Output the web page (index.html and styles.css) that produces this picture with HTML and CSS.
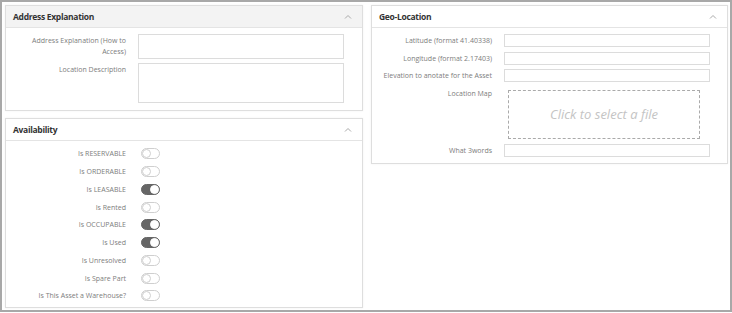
FILE: index.html
```html
<!DOCTYPE html>
<html lang="en">
<head>
    <meta charset="UTF-8">
    <title>Asset Location</title>
    <link rel="stylesheet" href="styles.css">
</head>
<body>
    <div class="frame">
        <div class="column left">
            <div class="panel">
                <div class="panel-header header-active">
                    <h3>Address Explanation</h3>
                    <svg class="chevron" width="8" height="5" viewBox="0 0 8 5"><polyline points="1,4.5 4,1.5 7,4.5" /></svg>
                </div>
                <div class="panel-body address">
                    <label class="field-label top">Address Explanation (How to Access)</label>
                    <div class="text-input tall"></div>
                    <label class="field-label top">Location Description</label>
                    <div class="text-input taller"></div>
                </div>
            </div>
            <div class="panel">
                <div class="panel-header">
                    <h3>Availability</h3>
                    <svg class="chevron" width="8" height="5" viewBox="0 0 8 5"><polyline points="1,4.5 4,1.5 7,4.5" /></svg>
                </div>
                <div class="panel-body toggles">
                    <div class="toggle-row"><span class="field-label">Is RESERVABLE</span><span class="toggle"></span></div>
                    <div class="toggle-row"><span class="field-label">Is ORDERABLE</span><span class="toggle"></span></div>
                    <div class="toggle-row"><span class="field-label">Is LEASABLE</span><span class="toggle on"></span></div>
                    <div class="toggle-row"><span class="field-label">Is Rented</span><span class="toggle"></span></div>
                    <div class="toggle-row"><span class="field-label">Is OCCUPABLE</span><span class="toggle on"></span></div>
                    <div class="toggle-row"><span class="field-label">Is Used</span><span class="toggle on"></span></div>
                    <div class="toggle-row"><span class="field-label">Is Unresolved</span><span class="toggle"></span></div>
                    <div class="toggle-row"><span class="field-label">Is Spare Part</span><span class="toggle"></span></div>
                    <div class="toggle-row"><span class="field-label">Is This Asset a Warehouse?</span><span class="toggle"></span></div>
                </div>
            </div>
        </div>
        <div class="column right">
            <div class="panel">
                <div class="panel-header">
                    <h3>Geo-Location</h3>
                    <svg class="chevron" width="8" height="5" viewBox="0 0 8 5"><polyline points="1,4.5 4,1.5 7,4.5" /></svg>
                </div>
                <div class="panel-body geo">
                    <label class="field-label">Latitude (format 41.40338)</label>
                    <div class="text-input"></div>
                    <label class="field-label">Longitude (format 2.17403)</label>
                    <div class="text-input"></div>
                    <label class="field-label">Elevation to anotate for the Asset</label>
                    <div class="text-input"></div>
                    <label class="field-label top map-label">Location Map</label>
                    <div class="file-drop">Click to select a file</div>
                    <label class="field-label">What 3words</label>
                    <div class="text-input"></div>
                </div>
            </div>
        </div>
    </div>
</body>
</html>
```

FILE: styles.css
```css
body {
    margin: 0;
    background: #fff;
    font-family: "Open Sans", "Noto Sans", sans-serif;
}
.frame {
    box-sizing: border-box;
    width: 732px;
    height: 312px;
    border: 2px solid #a8a8a8;
    padding: 3px 2px 0 3px;
    display: flex;
    gap: 8px;
    align-items: flex-start;
    background: #fff;
}
.column {
    display: flex;
    flex-direction: column;
    gap: 7px;
}
.column.left {
    width: 358px;
}
.column.right {
    flex: 1;
}
.panel {
    border: 1px solid #dedede;
    box-shadow: 0 0 2px rgba(0,0,0,0.06);
    background: #fff;
}
.panel-header {
    display: flex;
    justify-content: space-between;
    align-items: center;
    height: 21px;
    padding: 0 10px 0 7px;
    border-bottom: 1px solid #e4e4e4;
}
.header-active {
    background: #f3f3f3;
}
.panel-header h3 {
    margin: 0;
    font-size: 8.5px;
    font-weight: 700;
    color: #333;
    letter-spacing: -0.3px;
}
.chevron polyline {
    fill: none;
    stroke: #a9a9a9;
    stroke-width: 1;
}
.panel-body {
    display: grid;
    grid-template-columns: 120px 206px;
    column-gap: 12px;
    align-items: center;
}
.field-label {
    font-size: 7px;
    line-height: 11px;
    color: #7d7d7d;
    text-align: right;
}
.field-label.top {
    align-self: start;
    padding-top: 1px;
    padding-left: 10px;
}
.text-input {
    box-sizing: border-box;
    height: 13px;
    border: 1px solid #dcdcdc;
    background: #fff;
}
.address {
    padding: 6px 0 7px;
    row-gap: 4px;
}
.text-input.tall {
    height: 25px;
}
.text-input.taller {
    height: 40px;
}
.toggles {
    display: block;
    padding: 4px 0 2px;
}
.toggle-row {
    display: grid;
    grid-template-columns: 120px auto;
    column-gap: 15px;
    align-items: center;
    height: 17.75px;
}
.toggle {
    box-sizing: border-box;
    position: relative;
    width: 19px;
    height: 11px;
    border: 1px solid #cfcfcf;
    border-radius: 6px;
    background: #fff;
}
.toggle::after {
    content: "";
    position: absolute;
    top: 0;
    left: 0;
    box-sizing: border-box;
    width: 9px;
    height: 9px;
    border: 1px solid #cfcfcf;
    border-radius: 50%;
    background: #fff;
}
.toggle.on {
    background: #666;
    border-color: #666;
}
.toggle.on::after {
    left: 8px;
    border-color: #fff;
}
.geo {
    padding: 6px 0 6px;
    row-gap: 4.5px;
}
.map-label {
    padding-top: 2px;
}
.file-drop {
    box-sizing: border-box;
    width: 192px;
    height: 49px;
    margin: 3px 0 1px 4px;
    border: 1px dashed #aaa;
    display: flex;
    align-items: center;
    justify-content: center;
    font-size: 13px;
    font-style: italic;
    color: #c4c4c4;
}
```
